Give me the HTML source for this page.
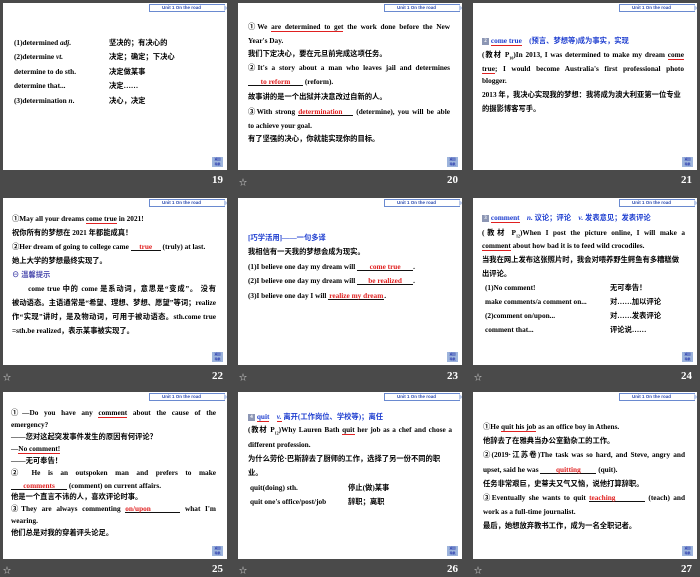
<!DOCTYPE html>
<html><head><meta charset="utf-8"><style>
*{margin:0;padding:0;box-sizing:border-box}
body{width:700px;height:577px;background:#4a4a4a;position:relative;overflow:hidden;font-family:"Liberation Serif","Noto Sans CJK SC",serif;font-weight:bold;color:#000}
.s{position:absolute;width:224px;height:167px;background:#fff;overflow:hidden}
.u{position:absolute;left:146px;top:1px;width:76px;height:8px;border:1px solid #6a8ad0;border-right:none;font:bold 4.5px "Liberation Sans",sans-serif;color:#2a4ab0;line-height:6px;padding-left:12px;white-space:nowrap}
.u:after{content:"";position:absolute;right:-3px;top:0;border-left:4px solid #b8c8ea;border-top:3px solid transparent;border-bottom:3px solid transparent}
.ic{position:absolute;left:209px;top:154px;width:11px;height:10px;background:#9db4dc;font:bold 3px sans-serif;color:#2233aa;text-align:center;line-height:5px}
.l{position:absolute;white-space:nowrap;font-size:7.3px;line-height:8px}
.j{text-align:justify;text-align-last:justify;white-space:nowrap}
.b{color:#1f3fd0}
.r{color:#e02020}
.ul{border-bottom:1px solid #e02020}
.bl{display:inline-block;border-bottom:1px solid #111;text-align:center;color:#e02020;line-height:7px}
.n{position:absolute;color:#fff;font:bold 11px "Liberation Serif",serif}
.st{position:absolute;color:#ccc;font-size:8px}
.bx{display:inline-block;width:7px;height:7px;background:#8c96b4;color:#fff;font-size:5px;text-align:center;line-height:7px;vertical-align:middle}
</style></head><body>

<!-- 19 -->
<div class="s" style="left:3px;top:3px">
<div class="u">Unit 1 On the road</div>
<div class="l" style="left:11px;top:36px">(1)determined <i>adj.</i></div><div class="l" style="left:106px;top:36px">坚决的；有决心的</div>
<div class="l" style="left:11px;top:50px">(2)determine <i>vt.</i></div><div class="l" style="left:106px;top:50px">决定；确定；下决心</div>
<div class="l" style="left:11px;top:65px">determine to do sth.</div><div class="l" style="left:106px;top:65px">决定做某事</div>
<div class="l" style="left:11px;top:79px">determine that...</div><div class="l" style="left:106px;top:79px">决定……</div>
<div class="l" style="left:11px;top:94px">(3)determination <i>n</i>.</div><div class="l" style="left:106px;top:94px">决心，决定</div>
<div class="ic">返回<br>导航</div>
</div>
<div class="n" style="left:212px;top:174px">19</div>

<!-- 20 -->
<div class="s" style="left:238px;top:3px">
<div class="u">Unit 1 On the road</div>
<div class="l j" style="left:10px;top:20px;width:202px">①We <span class="ul">are determined to get</span> the work done before the New</div>
<div class="l" style="left:10px;top:34px">Year's Day.</div>
<div class="l" style="left:10px;top:47px">我们下定决心，要在元旦前完成这项任务。</div>
<div class="l j" style="left:10px;top:61px;width:202px">②It's a story about a man who leaves jail and determines</div>
<div class="l" style="left:10px;top:75px"><span class="bl" style="width:55px">to reform</span> (reform).</div>
<div class="l" style="left:10px;top:90px">故事讲的是一个出狱并决意改过自新的人。</div>
<div class="l j" style="left:10px;top:105px;width:202px">③With strong <span class="bl" style="width:55px">determination</span> (determine), you will be able</div>
<div class="l" style="left:10px;top:119px">to achieve your goal.</div>
<div class="l" style="left:10px;top:132px">有了坚强的决心，你就能实现你的目标。</div>
<div class="ic">返回<br>导航</div>
</div>
<div class="st" style="left:239px;top:177px">☆</div>
<div class="n" style="left:447px;top:174px">20</div>

<!-- 21 -->
<div class="s" style="left:473px;top:3px">
<div class="u">Unit 1 On the road</div>
<div class="l b" style="left:9px;top:34px"><span class="bx">2</span> <span class="ul">come true</span>　(预言、梦想等)成为事实，实现</div>
<div class="l j" style="left:9px;top:48px;width:202px">(教材 P<sub style="font-size:4px">10</sub>)In 2013, I was determined to make my dream <span class="ul">come</span></div>
<div class="l j" style="left:9px;top:62px;width:202px"><span class="ul">true</span>; I would become Australia's first professional photo</div>
<div class="l" style="left:9px;top:74px">blogger.</div>
<div class="l" style="left:9px;top:88px">2013 年，我决心实现我的梦想：我将成为澳大利亚第一位专业</div>
<div class="l" style="left:9px;top:102px">的摄影博客写手。</div>
<div class="ic">返回<br>导航</div>
</div>
<div class="n" style="left:681px;top:174px">21</div>

<!-- 22 -->
<div class="s" style="left:3px;top:198px">
<div class="u">Unit 1 On the road</div>
<div class="l" style="left:9px;top:17px">①May all your dreams <span class="ul">come true</span> in 2021!</div>
<div class="l" style="left:9px;top:31px">祝你所有的梦想在 2021 年都能成真！</div>
<div class="l" style="left:9px;top:45px">②Her dream of going to college came <span class="bl" style="width:30px">true</span> (truly) at last.</div>
<div class="l" style="left:9px;top:59px">她上大学的梦想最终实现了。</div>
<div class="l" style="left:9px;top:73px;color:#5050b0">⊖ 温馨提示</div>
<div class="l j" style="left:9px;top:87px;width:204px">　　come true 中的 come 是系动词，意思是“变成”。 没有</div>
<div class="l j" style="left:9px;top:101px;width:204px">被动语态。主语通常是“希望、理想、梦想、愿望”等词；realize</div>
<div class="l j" style="left:9px;top:115px;width:204px">作“实现”讲时，是及物动词，可用于被动语态。sth.come true</div>
<div class="l" style="left:9px;top:129px">=sth.be realized，表示某事被实现了。</div>
<div class="ic">返回<br>导航</div>
</div>
<div class="st" style="left:3px;top:372px">☆</div>
<div class="n" style="left:212px;top:370px">22</div>

<!-- 23 -->
<div class="s" style="left:238px;top:198px">
<div class="u">Unit 1 On the road</div>
<div class="l b" style="left:10px;top:36px">[巧学活用]——一句多译</div>
<div class="l" style="left:10px;top:50px">我相信有一天我的梦想会成为现实。</div>
<div class="l" style="left:10px;top:65px">(1)I believe one day my dream will <span class="bl" style="width:56px">come true</span>.</div>
<div class="l" style="left:10px;top:79px">(2)I believe one day my dream will <span class="bl" style="width:56px">be realized</span>.</div>
<div class="l" style="left:10px;top:94px">(3)I believe one day I will <span class="bl" style="width:56px">realize my dream</span>.</div>
<div class="ic">返回<br>导航</div>
</div>
<div class="st" style="left:239px;top:372px">☆</div>
<div class="n" style="left:447px;top:370px">23</div>

<!-- 24 -->
<div class="s" style="left:473px;top:198px">
<div class="u">Unit 1 On the road</div>
<div class="l b" style="left:9px;top:16px"><span class="bx">3</span> <span class="ul">comment</span>　<i>n.</i> 议论；评论　<i>v.</i> 发表意见；发表评论</div>
<div class="l j" style="left:9px;top:31px;width:203px">(教材 P<sub style="font-size:4px">12</sub>)When I post the picture online, I will make a</div>
<div class="l" style="left:9px;top:44px"><span class="ul">comment</span> about how bad it is to feed wild crocodiles.</div>
<div class="l" style="left:9px;top:58px">当我在网上发布这张照片时，我会对喂养野生鳄鱼有多糟糕做</div>
<div class="l" style="left:9px;top:72px">出评论。</div>
<div class="l" style="left:12px;top:86px">(1)No comment!</div><div class="l" style="left:137px;top:86px">无可奉告！</div>
<div class="l" style="left:12px;top:100px">make comments/a comment on...</div><div class="l" style="left:137px;top:100px">对……加以评论</div>
<div class="l" style="left:12px;top:114px">(2)comment on/upon...</div><div class="l" style="left:137px;top:114px">对……发表评论</div>
<div class="l" style="left:12px;top:128px">comment that...</div><div class="l" style="left:137px;top:128px">评论说……</div>
<div class="ic">返回<br>导航</div>
</div>
<div class="st" style="left:474px;top:372px">☆</div>
<div class="n" style="left:681px;top:370px">24</div>

<!-- 25 -->
<div class="s" style="left:3px;top:392px">
<div class="u">Unit 1 On the road</div>
<div class="l j" style="left:8px;top:17px;width:205px">①—Do you have any <span class="ul">comment</span> about the cause of the</div>
<div class="l" style="left:8px;top:29px">emergency?</div>
<div class="l" style="left:8px;top:41px">——您对这起突发事件发生的原因有何评论？</div>
<div class="l" style="left:8px;top:53px">—<span class="ul">No comment!</span></div>
<div class="l" style="left:8px;top:65px">——无可奉告！</div>
<div class="l j" style="left:8px;top:77px;width:205px">② He is an outspoken man and prefers to make</div>
<div class="l" style="left:8px;top:90px"><span class="bl" style="width:56px">comments</span> (comment) on current affairs.</div>
<div class="l" style="left:8px;top:101px">他是一个直言不讳的人，喜欢评论时事。</div>
<div class="l j" style="left:8px;top:113px;width:205px">③They are always commenting <span class="bl" style="width:55px">on/upon</span> what I'm</div>
<div class="l" style="left:8px;top:125px">wearing.</div>
<div class="l" style="left:8px;top:137px">他们总是对我的穿着评头论足。</div>
<div class="ic">返回<br>导航</div>
</div>
<div class="st" style="left:3px;top:565px">☆</div>
<div class="n" style="left:212px;top:563px">25</div>

<!-- 26 -->
<div class="s" style="left:238px;top:392px">
<div class="u">Unit 1 On the road</div>
<div class="l b" style="left:10px;top:21px"><span class="bx">4</span> <span class="ul">quit</span>　<span class="ul"><i>v.</i></span> 离开(工作岗位、学校等)；离任</div>
<div class="l j" style="left:10px;top:34px;width:204px">(教材 P<sub style="font-size:4px">12</sub>)Why Lauren Bath <span class="ul">quit</span> her job as a chef and chose a</div>
<div class="l" style="left:10px;top:49px">different profession.</div>
<div class="l" style="left:10px;top:63px">为什么劳伦·巴斯辞去了厨师的工作，选择了另一份不同的职</div>
<div class="l" style="left:10px;top:77px">业。</div>
<div class="l" style="left:12px;top:92px">quit(doing) sth.</div><div class="l" style="left:110px;top:92px">停止(做)某事</div>
<div class="l" style="left:12px;top:106px">quit one's office/post/job</div><div class="l" style="left:110px;top:106px">辞职；离职</div>
<div class="ic">返回<br>导航</div>
</div>
<div class="st" style="left:239px;top:565px">☆</div>
<div class="n" style="left:447px;top:563px">26</div>

<!-- 27 -->
<div class="s" style="left:473px;top:392px">
<div class="u">Unit 1 On the road</div>
<div class="l" style="left:10px;top:31px">①He <span class="ul">quit his job</span> as an office boy in Athens.</div>
<div class="l" style="left:10px;top:45px">他辞去了在雅典当办公室勤杂工的工作。</div>
<div class="l j" style="left:10px;top:59px;width:202px">②(2019·江苏卷)The task was so hard, and Steve, angry and</div>
<div class="l" style="left:10px;top:74px">upset, said he was <span class="bl" style="width:56px">quitting</span> (quit).</div>
<div class="l" style="left:10px;top:88px">任务非常艰巨，史蒂夫又气又恼，说他打算辞职。</div>
<div class="l j" style="left:10px;top:102px;width:202px">③Eventually she wants to quit <span class="bl" style="width:56px">teaching</span> (teach) and</div>
<div class="l" style="left:10px;top:116px">work as a full-time journalist.</div>
<div class="l" style="left:10px;top:130px">最后，她想放弃教书工作，成为一名全职记者。</div>
<div class="ic">返回<br>导航</div>
</div>
<div class="st" style="left:474px;top:565px">☆</div>
<div class="n" style="left:681px;top:563px">27</div>

</body></html>
